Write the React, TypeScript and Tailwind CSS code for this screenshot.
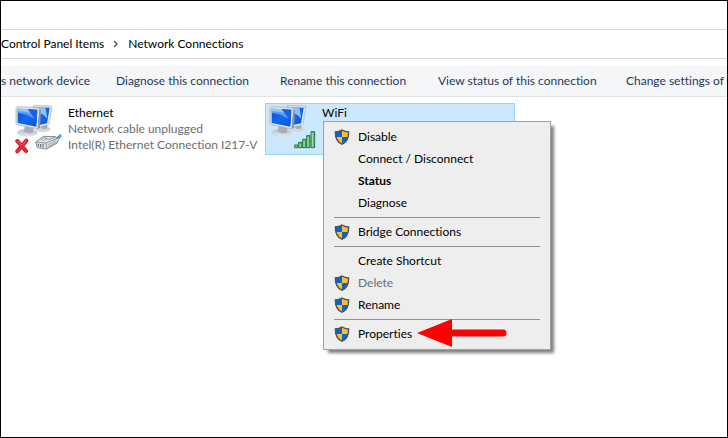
import type { ReactNode } from "react";

const COMMANDS = [
  "s network device",
  "Diagnose this connection",
  "Rename this connection",
  "View status of this connection",
  "Change settings of",
];

type MenuEntry = {
  label: string;
  shield?: boolean;
  bold?: boolean;
  disabled?: boolean;
  arrow?: boolean;
};

const MENU_GROUPS: MenuEntry[][] = [
  [
    { label: "Disable", shield: true },
    { label: "Connect / Disconnect" },
    { label: "Status", bold: true },
    { label: "Diagnose" },
  ],
  [{ label: "Bridge Connections", shield: true }],
  [
    { label: "Create Shortcut" },
    { label: "Delete", shield: true, disabled: true },
    { label: "Rename", shield: true },
  ],
  [{ label: "Properties", shield: true, arrow: true }],
];

function ShieldIcon() {
  return (
    <svg className="h-4 w-4" viewBox="0 0 16 16" aria-hidden="true">
      <path d="M8 .6C6 2 3.800 2.500 1 2.600C.8 8.500 2.500 13 8 15.600V.6Z" fill="#0b63ce" />
      <path d="M8 .6C10 2 12.200 2.500 15 2.600C15.200 8.500 13.500 13 8 15.600V.6Z" fill="#ffbd33" />
      <path d="M8 8H1.500C2.200 11.500 4 14 8 15.600V8Z" fill="#ffbd33" />
      <path d="M8 8H14.500C13.800 11.500 12 14 8 15.600V8Z" fill="#0b63ce" />
      <path
        d="M8 1C6 2.400 3.800 2.900 1.400 3C1.200 8.500 2.700 12.700 8 15.200C13.300 12.700 14.800 8.500 14.600 3C12.200 2.900 10 2.400 8 1Z"
        fill="none"
        stroke="#4d5459"
        strokeWidth="1.400"
      />
    </svg>
  );
}

function Monitors() {
  return (
    <>
      <defs>
        <linearGradient id="screen" x1="0" y1="0" x2="1" y2="1">
          <stop offset="0" stopColor="#0a50d8" />
          <stop offset="0.5" stopColor="#1268ee" />
          <stop offset="1" stopColor="#0b55de" />
        </linearGradient>
        <linearGradient id="base" x1="0" y1="0" x2="0" y2="1">
          <stop offset="0" stopColor="#b9bcc0" />
          <stop offset="1" stopColor="#e6e8ea" />
        </linearGradient>
      </defs>
      <ellipse cx="105" cy="93" rx="23" ry="9" fill="#d3d6d9" />
      <path d="M98 78L119 74L117 92L101 92Z" fill="#a5a9ad" />
      <path d="M76 22L129 24Q132 24 132 27L123 78Q122 81 119 82L88 88Z" fill="#dfe4e8" stroke="#a9b0b6" strokeWidth="2" />
      <path d="M80 27L125 29L117 76L90 82Z" fill="url(#screen)" />
      <path d="M80 27L112 28L118 62Q106 46 88 44Z" fill="#8bc0fa" />
      <ellipse cx="58" cy="104" rx="30" ry="11" fill="url(#base)" stroke="#c6c9cc" />
      <path d="M50 84L77 90L74 104Q61 109 48 101Z" fill="#aaaeb2" />
      <path d="M29 26L90 29Q95 29 94 34L91 88Q91 93 86 92L28 80Q24 79 24 75L24 31Q24 26 29 26Z" fill="#e4e8eb" stroke="#9ba3aa" strokeWidth="2" />
      <path d="M29 32L88 35L85 86L29 75Z" fill="url(#screen)" />
      <path d="M29 32L66 34L80 64Q60 48 29 45Z" fill="#5c9df3" />
      <path d="M58 33L88 35L86 77Q77 54 58 33Z" fill="#1761e3" />
      <path d="M29 32L58 33L67 45Q49 39 29 40Z" fill="#98c8fa" />
      <path d="M94 35L99 37L96 89L89 92Z" fill="#8d969d" />
    </>
  );
}

function EthernetIcon() {
  return (
    <svg className="h-[50px] w-[50px] shrink-0" viewBox="18 18 150 150" aria-hidden="true">
      <Monitors />
      <path d="M135 119Q148 118 159 107L161 118Q154 125 142 129Z" fill="#5eb0e9" />
      <path d="M137 123Q149 120 159 110" fill="none" stroke="#2685d1" strokeWidth="3" />
      <path d="M83 132L107 115L143 116L151 124L148 135L116 153L88 149Z" fill="#e0e3e6" stroke="#6d7881" strokeWidth="2.500" />
      <path d="M84 132L114 135L149 121M114 135L117 152M107 115L121 125L143 117" fill="none" stroke="#7d8790" strokeWidth="2.500" />
      <path d="M91 137V145M98 138V147M105 138V148" stroke="#515c65" strokeWidth="3" />
      <path d="M98 127L108 120M106 128L117 121M121 140L143 128M121 146L146 132" stroke="#8b959d" strokeWidth="2.500" />
      <path d="M28 129L54 159M55 128L28 160" stroke="#b90d20" strokeWidth="12" strokeLinecap="round" />
      <path d="M28 129L54 159M55 128L28 160" stroke="#ee2936" strokeWidth="8" strokeLinecap="round" />
      <path d="M28 128L40 142M54 128L44 140" stroke="#ff7078" strokeWidth="2" />
    </svg>
  );
}

function WifiIcon() {
  return (
    <svg className="h-[50px] w-[50px] shrink-0" viewBox="18 18 150 150" aria-hidden="true">
      <Monitors />
      <g fill="#66b580" stroke="#217c3e" strokeWidth="3">
        <path d="M98 149V141H108V149Z" />
        <path d="M110 149V133H120V149Z" />
        <path d="M122 149V124H132V149Z" />
        <path d="M134 149V113H144V149Z" />
        <path d="M147 149V101H158V149Z" />
      </g>
      <path d="M102 147V144M114 147V137M126 147V128M138 147V117M151 147V105" stroke="#b2ddbd" strokeWidth="3" />
    </svg>
  );
}

function Tile({
  icon,
  name,
  selected,
  children,
}: {
  icon: ReactNode;
  name: string;
  selected?: boolean;
  children?: ReactNode;
}) {
  return (
    <div
      className={
        selected
          ? "relative flex h-[52px] w-[250px] shrink-0 gap-1 border border-[#99d1ff] bg-[#cce8ff] pl-0.5"
          : "flex h-[52px] w-[250px] shrink-0 gap-1 border border-transparent pl-0.5"
      }
    >
      {icon}
      <div className="whitespace-nowrap pt-px leading-4">
        <h2>{name}</h2>
        {!selected && children}
      </div>
      {selected && children}
    </div>
  );
}

function RedArrow() {
  return (
    <svg
      className="pointer-events-none absolute -top-1 left-[89px] h-7 w-[90px]"
      viewBox="0 0 90 28"
      aria-hidden="true"
    >
      <path d="M0 14L35 0V28Z" fill="#ff0000" />
      <path d="M30 14H86" stroke="#ff0000" strokeWidth="7" strokeLinecap="round" />
    </svg>
  );
}

function MenuItem({ label, shield, bold, disabled, arrow }: MenuEntry) {
  return (
    <div className="relative">
      <button
        type="button"
        role="menuitem"
        disabled={disabled}
        className="flex h-[22px] w-full items-center gap-2 pl-1.5 text-left hover:bg-white disabled:text-[#6d6d6d]"
      >
        <span className="h-4 w-4">{shield && <ShieldIcon />}</span>
        <span className={bold ? "font-bold" : ""}>{label}</span>
      </button>
      {arrow && <RedArrow />}
    </div>
  );
}

function ContextMenu() {
  return (
    <div
      role="menu"
      className="absolute left-[57px] top-[17px] z-10 w-[228px] border border-[#a0a0a0] bg-[#eeeeee] px-1 py-1 shadow-[4px_4px_3px_-1px_rgba(0,0,0,0.5)]"
    >
      {MENU_GROUPS.map((group, i) => (
        <div key={i}>
          {i > 0 && <hr className="mx-1.5 my-[3px] border-[#919191]" />}
          {group.map((entry) => (
            <MenuItem key={entry.label} {...entry} />
          ))}
        </div>
      ))}
    </div>
  );
}

export default function App() {
  return (
    <div className="flex min-h-screen flex-col overflow-hidden border border-black bg-white font-['Lato','Open_Sans',sans-serif] text-[12px] text-black [font-variant-ligatures:none]">
      <div className="h-7" />
      <nav className="flex h-[30px] items-center gap-2 whitespace-nowrap border-y border-[#d9d9d9]">
        <a href="#items">Control Panel Items</a>
        <svg className="h-2 w-2" viewBox="0 0 8 8" fill="none" stroke="#5f5f5f" strokeWidth="1.500" aria-hidden="true">
          <path d="M2 1L5 4L2 7" />
        </svg>
        <a href="#connections">Network Connections</a>
      </nav>

      <div className="mt-[7px] grid h-[31px] grid-cols-[115px_164px_158px_188px_1fr] items-center overflow-hidden whitespace-nowrap border-b border-dotted border-[#d0d0d0] bg-[#f5f6f8] text-[#1e395b]">
        {COMMANDS.map((command) => (
          <button key={command} type="button" className="text-left">
            {command}
          </button>
        ))}
      </div>

      <main className="flex gap-1 pl-2.5 pt-1.5">
        <Tile icon={<EthernetIcon />} name="Ethernet">
          <p className="text-[#6d6d6d]">Network cable unplugged</p>
          <p className="text-[#6d6d6d]">Intel(R) Ethernet Connection I217-V</p>
        </Tile>
        <Tile icon={<WifiIcon />} name="WiFi" selected>
          <ContextMenu />
        </Tile>
      </main>
    </div>
  );
}
